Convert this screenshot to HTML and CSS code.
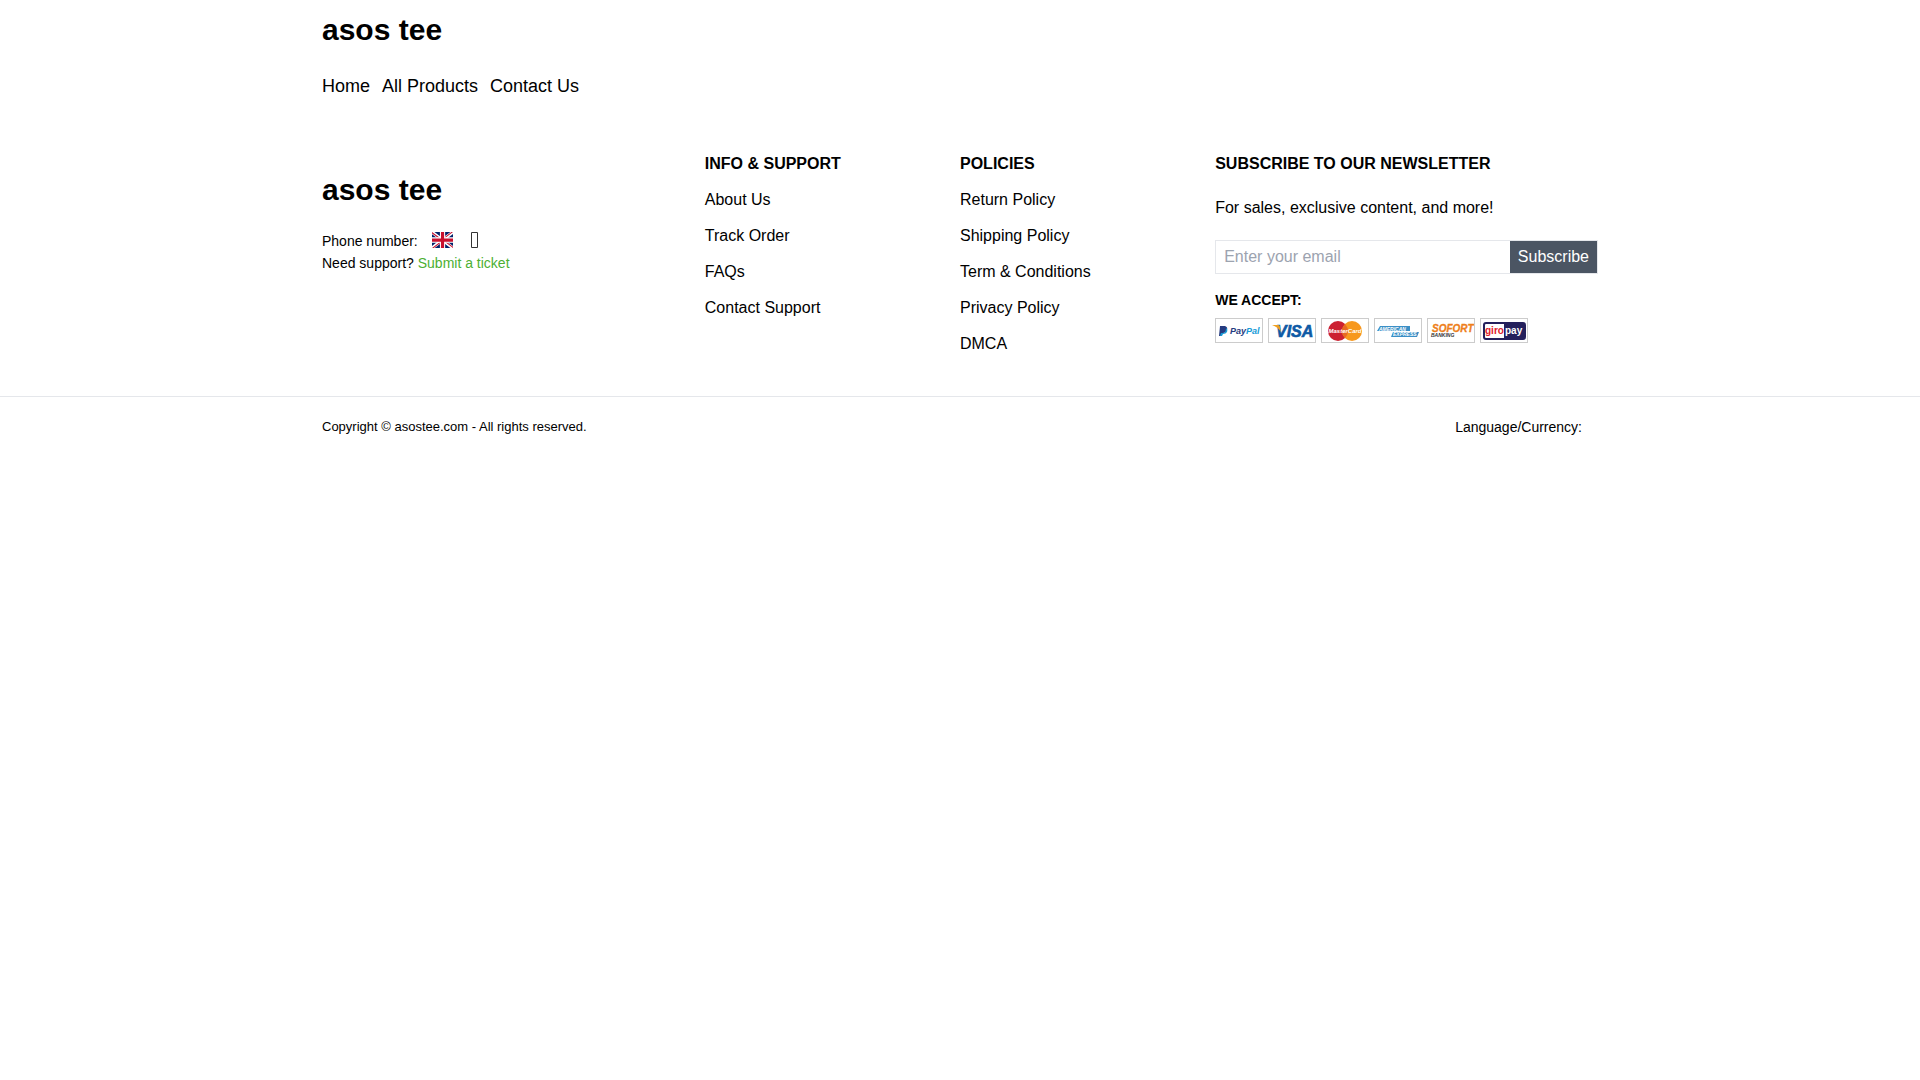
FILE: index.html
```html
<!DOCTYPE html>
<html lang="en">
<head>
<meta charset="utf-8">
<meta name="viewport" content="width=device-width, initial-scale=1">
<title>asos tee</title>
<link rel="stylesheet" href="styles.css">
</head>
<body>
<header class="container header">
  <a class="brand" href="#">asos tee</a>
  <nav class="nav">
    <a href="#">Home</a>
    <a href="#">All Products</a>
    <a href="#">Contact Us</a>
  </nav>
</header>
<footer>
  <div class="container columns">
    <section class="about">
      <a class="brand" href="#">asos tee</a>
      <div class="contact">
        <div class="phone">
          <span>Phone number:</span>
          <svg class="flag" viewBox="0 0 640 480" preserveAspectRatio="none" role="img" aria-label="United Kingdom">
            <path fill="#012169" d="M0 0h640v480H0z"/>
            <path fill="#fff" d="m75 0 244 181L562 0h78v62L400 241l240 178v61h-80L320 301 81 480H0v-60l239-178L0 64V0z"/>
            <path fill="#c8102e" d="m424 281 216 159v40L369 281zm-184 20 6 35L54 480H0zM640 0v3L391 191l2-44L590 0zM0 0l239 176h-60L0 42z"/>
            <path fill="#fff" d="M241 0v480h160V0zM0 160v160h640V160z"/>
            <path fill="#c8102e" d="M0 193v96h640v-96zM273 0v480h96V0z"/>
          </svg>
          <svg class="glyph" viewBox="0 0 7 16" aria-hidden="true"><path d="M.5.5h6v15h-6z" fill="none" stroke="#333"/></svg>
        </div>
        <div>Need support? <a class="ticket" href="#">Submit a ticket</a></div>
      </div>
    </section>
    <section>
      <h2 class="heading">INFO &amp; SUPPORT</h2>
      <ul class="links">
        <li><a href="#">About Us</a></li>
        <li><a href="#">Track Order</a></li>
        <li><a href="#">FAQs</a></li>
        <li><a href="#">Contact Support</a></li>
      </ul>
    </section>
    <section>
      <h2 class="heading">POLICIES</h2>
      <ul class="links">
        <li><a href="#">Return Policy</a></li>
        <li><a href="#">Shipping Policy</a></li>
        <li><a href="#">Term &amp; Conditions</a></li>
        <li><a href="#">Privacy Policy</a></li>
        <li><a href="#">DMCA</a></li>
      </ul>
    </section>
    <section>
      <h2 class="heading">SUBSCRIBE TO OUR NEWSLETTER</h2>
      <p class="pitch">For sales, exclusive content, and more!</p>
      <form class="subscribe">
        <input class="email" type="email" placeholder="Enter your email" aria-label="Email">
        <button class="submit" type="button">Subscribe</button>
      </form>
      <h3 class="accept">WE ACCEPT:</h3>
      <div class="cards">
        <svg class="card" viewBox="0 0 46 23" role="img" aria-label="PayPal">
          <path fill="#253b80" d="M4 7h5q3 1 2 4-1 3-4 3H6l-1 3H3z"/>
          <path fill="#179bd7" d="M10 9q2 1 1 4-1 2-4 2l-1 2H4l1-3h2q3 0 3-5z"/>
          <text x="14" y="15" font-size="9" fill="#253b80">Pay<tspan fill="#179bd7">Pal</tspan></text>
        </svg>
        <svg class="card" viewBox="0 0 46 23" role="img" aria-label="Visa">
          <text x="7" y="18" font-size="16" fill="#0e5aa5" stroke="#0e5aa5" stroke-width=".6">VISA</text>
          <path fill="#f0a020" d="M3 6h6q2 0 2 3l1 4Q9 8 3 6z"/>
        </svg>
        <svg class="card" viewBox="0 0 46 23" role="img" aria-label="MasterCard">
          <circle cx="16" cy="12" r="10" fill="#cc2131"/>
          <circle cx="30" cy="12" r="10" fill="#f7981d"/>
          <path d="M23 5q-6 7 0 14 6-7 0-14" fill="#e86a24"/>
          <text x="23" y="14" font-size="6" text-anchor="middle" fill="#fff">MasterCard</text>
        </svg>
        <svg class="card" viewBox="0 0 46 23" role="img" aria-label="American Express">
          <path fill="#3b8fc6" d="M5 7h30v5H2zM18 13h26l-2 5H16z"/>
          <text x="4" y="12" font-size="5" fill="#fff">AMERICAN</text>
          <text x="18" y="17" font-size="5" fill="#fff">EXPRESS</text>
        </svg>
        <svg class="card" viewBox="0 0 46 23" role="img" aria-label="Sofort Banking">
          <text x="4" y="13" font-size="10" fill="#ee7f1b" stroke="#ee7f1b" stroke-width=".3">SOFORT</text>
          <text x="3" y="18" font-size="5" fill="#333">BANKING</text>
        </svg>
        <svg class="card" viewBox="0 0 46 23" role="img" aria-label="giropay">
          <rect x="2" y="3" width="43" height="18" rx="3" fill="#24205c"/>
          <path fill="#fff" d="M5 5h18v14H5q-1 0-1-1V6q0-1 1-1z"/>
          <g class="upright"><text x="4" y="15" font-size="10" fill="#e2202c">giro</text>
          <text x="24" y="15" font-size="10" fill="#fff">pay</text></g>
        </svg>
      </div>
    </section>
  </div>
  <div class="bottom">
    <div class="container bar">
      <span class="copyright">Copyright © asostee.com - All rights reserved.</span>
      <span class="language">Language/Currency:</span>
    </div>
  </div>
</footer>
</body>
</html>
```
FILE: styles.css
```css
* { box-sizing: border-box; }
body {
  margin: 0;
  background: #fff;
  color: #000;
  font: 16px/24px "Liberation Sans", Arial, sans-serif;
}
a { color: inherit; text-decoration: none; }
.container {
  max-width: 1300px;
  margin: 0 auto;
  padding: 0 12px;
}
.header { padding-top: 12px; }
.brand {
  display: block;
  font-size: 30px;
  line-height: 36px;
  font-weight: 700;
}
.nav {
  display: flex;
  gap: 12px;
  margin-top: 24px;
  font-size: 18px;
  line-height: 28px;
}
.columns {
  display: grid;
  grid-template-columns: 3fr 2fr 2fr 3fr;
  margin-top: 52px;
}
.about { padding-top: 20px; }
.contact {
  margin-top: 22px;
  font-size: 14px;
  line-height: 22px;
}
.phone { display: flex; }
.flag {
  width: 21px;
  height: 16px;
  margin: 2px 18px 0 14px;
}
.glyph {
  width: 7px;
  height: 16px;
  margin-top: 2px;
}
.ticket { color: #4caf32; }
.heading {
  margin: 0;
  font-size: 16px;
  line-height: 24px;
}
.links {
  display: grid;
  gap: 12px;
  margin: 12px 0 0;
  padding: 0;
  list-style: none;
}
.pitch { margin: 20px 0; }
.subscribe {
  display: flex;
  border: 1px solid #e5e7eb;
}
.email {
  flex: 1;
  min-width: 0;
  height: 32px;
  padding: 0 8px;
  border: 0;
  background: #fff;
  font: inherit;
}
.email::placeholder { color: #9ca3af; }
.submit {
  height: 32px;
  padding: 0 8px;
  border: 0;
  background: #4b5563;
  color: #fff;
  font: inherit;
}
.accept {
  margin: 16px 0 8px;
  font-size: 14px;
  line-height: 20px;
}
.cards { display: flex; gap: 5px; }
.card {
  width: 48px;
  height: 25px;
  border: 1px solid #ccc;
  font-weight: 700;
  font-style: italic;
}
.upright { font-style: normal; }
.bottom {
  margin-top: 40px;
  border-top: 1px solid #e5e7eb;
}
.bar {
  display: flex;
  justify-content: space-between;
  padding-top: 20px;
  padding-bottom: 20px;
  line-height: 20px;
}
.copyright { font-size: 13px; }
.language { padding-right: 16px; font-size: 14px; }
```
